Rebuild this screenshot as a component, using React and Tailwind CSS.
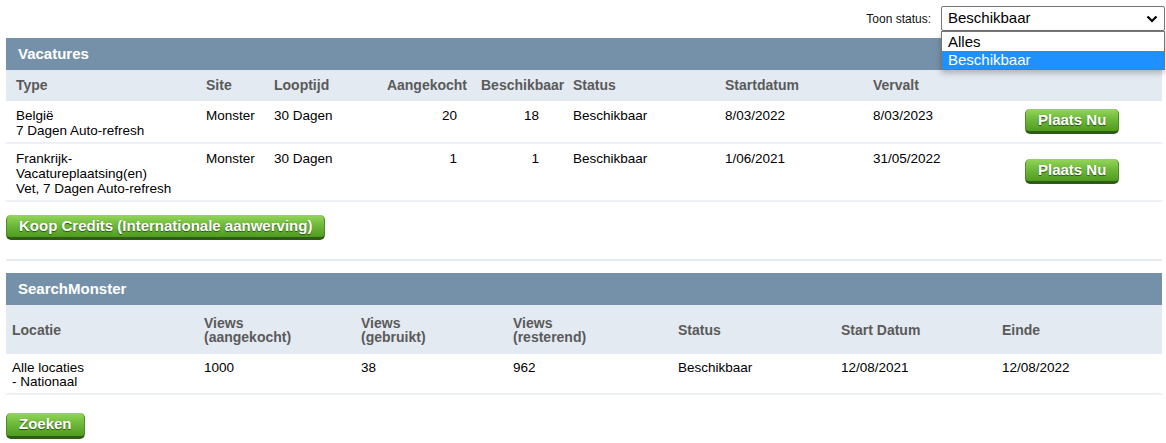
import React from 'react';

// Green "sliding door" style button used across the page
const GreenButton = ({ children, className = '' }) => (
  <button
    className={`h-[25px] px-[12px] rounded-[5px] border-x border-[#4c8a22] border-b-[3px] border-b-[#2f5c14] bg-gradient-to-b from-[#94d65a] via-[#6cb737] to-[#509c20] text-white font-bold text-[15px] leading-[20px] whitespace-nowrap [text-shadow:0_1px_1px_#2a4d12] ${className}`}
  >
    {children}
  </button>
);

const vacatures = [
  {
    type: ['België', '7 Dagen Auto-refresh'],
    site: 'Monster',
    looptijd: '30 Dagen',
    aangekocht: 20,
    beschikbaar: 18,
    status: 'Beschikbaar',
    start: '8/03/2022',
    vervalt: '8/03/2023',
  },
  {
    type: ['Frankrijk-', 'Vacatureplaatsing(en)', 'Vet, 7 Dagen Auto-refresh'],
    site: 'Monster',
    looptijd: '30 Dagen',
    aangekocht: 1,
    beschikbaar: 1,
    status: 'Beschikbaar',
    start: '1/06/2021',
    vervalt: '31/05/2022',
  },
];

const vacCols = 'grid grid-cols-[190px_68px_114px_95px_92px_150px_148px_153px_1fr]';
const smCols = 'grid grid-cols-[192px_157px_152px_165px_163px_161px_1fr]';

const SectionTitle = ({ children }) => (
  <div className="h-[32px] bg-[#7591a9] flex items-center pl-[12px] text-white font-bold text-[15px]">
    {children}
  </div>
);

export default function App() {
  return (
    <div className="min-h-[443px] bg-white font-['Liberation_Sans',Arial,sans-serif] text-black pl-[6px] pr-[4px]">
      {/* status filter */}
      <div className="pt-[6px] flex justify-end items-center gap-[10px] -mr-[3px]">
        <span className="text-[12px] text-[#111]">Toon status:</span>
        <div className="relative w-[224px]">
          <div className="h-[25px] border border-[#767676] rounded-[2px] flex items-center justify-between pl-[6px] pr-[6px] text-[15px]">
            <span>Beschikbaar</span>
            <svg width="12" height="8" viewBox="0 0 12 8" fill="none">
              <path d="M1.5 1.5 L6 6 L10.5 1.5" stroke="#000" strokeWidth="2.2" />
            </svg>
          </div>
          <div className="absolute left-0 right-0 top-[25px] z-10 border border-[#767676] bg-white shadow-[0_3px_6px_rgba(0,0,0,0.25)] text-[15px]">
            <div className="h-[19px] leading-[19px] pl-[6px]">Alles</div>
            <div className="h-[18px] leading-[18px] pl-[6px] bg-[#1e90ff] text-white">Beschikbaar</div>
          </div>
        </div>
      </div>

      {/* Vacatures */}
      <div className="mt-[7px]">
        <SectionTitle>Vacatures</SectionTitle>
        <div className={`${vacCols} h-[31px] items-center bg-[#e4eaf2] text-[14px] font-bold text-[#5a5a5a] whitespace-nowrap`}>
          <div className="pl-[10px]">Type</div>
          <div className="pl-[10px]">Site</div>
          <div className="pl-[10px]">Looptijd</div>
          <div className="text-right pr-[6px]">Aangekocht</div>
          <div className="pl-[8px]">Beschikbaar</div>
          <div className="pl-[8px]">Status</div>
          <div className="pl-[10px]">Startdatum</div>
          <div className="pl-[10px]">Vervalt</div>
          <div />
        </div>
        {vacatures.map((v, i) => (
          <div key={i} className={`${vacCols} border-b-2 border-[#edf0f6] text-[13.5px] leading-[15px] pt-[7px] pb-[4px]`}>
            <div className="pl-[10px]">
              {v.type.map((t) => (
                <div key={t}>{t}</div>
              ))}
            </div>
            <div className="pl-[10px]">{v.site}</div>
            <div className="pl-[10px]">{v.looptijd}</div>
            <div className="text-right pr-[16px]">{v.aangekocht}</div>
            <div className="text-right pr-[26px]">{v.beschikbaar}</div>
            <div className="pl-[8px]">{v.status}</div>
            <div className="pl-[10px]">{v.start}</div>
            <div className="pl-[10px]">{v.vervalt}</div>
            <div className="pl-[9px] self-center mb-[4px]">
              <GreenButton>Plaats Nu</GreenButton>
            </div>
          </div>
        ))}
        <div className="mt-[12px]">
          <GreenButton>Koop Credits (Internationale aanwerving)</GreenButton>
        </div>
      </div>

      <div className="mt-[19px] h-[2px] bg-[#e6ebf2]" />

      {/* SearchMonster */}
      <div className="mt-[12px]">
        <SectionTitle>SearchMonster</SectionTitle>
        <div className={`${smCols} h-[49px] items-center bg-[#e4eaf2] text-[14px] leading-[14px] font-bold text-[#5a5a5a]`}>
          <div className="pl-[6px]">Locatie</div>
          <div className="pl-[6px]">Views<br />(aangekocht)</div>
          <div className="pl-[6px]">Views<br />(gebruikt)</div>
          <div className="pl-[6px]">Views<br />(resterend)</div>
          <div className="pl-[6px]">Status</div>
          <div className="pl-[6px]">Start Datum</div>
          <div className="pl-[6px]">Einde</div>
        </div>
        <div className={`${smCols} border-b-2 border-[#edf0f6] text-[13.5px] leading-[14px] pt-[7px] pb-[4px]`}>
          <div className="pl-[6px]">Alle locaties<br />- Nationaal</div>
          <div className="pl-[6px]">1000</div>
          <div className="pl-[6px]">38</div>
          <div className="pl-[6px]">962</div>
          <div className="pl-[6px]">Beschikbaar</div>
          <div className="pl-[6px]">12/08/2021</div>
          <div className="pl-[6px]">12/08/2022</div>
        </div>
        <div className="mt-[17px] pb-[6px]">
          <GreenButton className="h-[26px]">Zoeken</GreenButton>
        </div>
      </div>
    </div>
  );
}
